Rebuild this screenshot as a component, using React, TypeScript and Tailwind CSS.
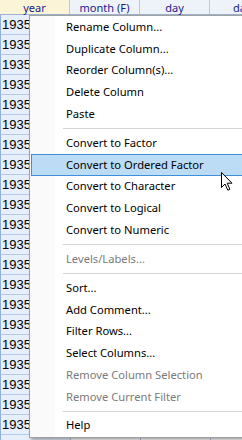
import React from "react";

type Item = { label: string; disabled?: boolean; active?: boolean } | "sep";

const items: Item[] = [
  { label: "Rename Column..." },
  { label: "Duplicate Column..." },
  { label: "Reorder Column(s)..." },
  { label: "Delete Column" },
  { label: "Paste" },
  "sep",
  { label: "Convert to Factor" },
  { label: "Convert to Ordered Factor", active: true },
  { label: "Convert to Character" },
  { label: "Convert to Logical" },
  { label: "Convert to Numeric" },
  "sep",
  { label: "Levels/Labels...", disabled: true },
  "sep",
  { label: "Sort..." },
  { label: "Add Comment..." },
  { label: "Filter Rows..." },
  { label: "Select Columns..." },
  { label: "Remove Column Selection", disabled: true },
  { label: "Remove Current Filter", disabled: true },
  "sep",
  { label: "Help" },
];

const headers = ["year", "month (F)", "day", "date"];

export default function App() {
  const rows = Array.from({ length: 22 });
  return (
    <div
      className="relative w-[242px] h-[440px] overflow-hidden bg-white"
      style={{ fontFamily: '"Noto Sans", "Liberation Sans", sans-serif' }}
    >
      {/* Header */}
      <div className="flex h-[15px] border-b border-[#9fb4d2] bg-[#eef3fa]">
        {headers.map((h, i) => (
          <div
            key={h}
            className={`w-[70px] shrink-0 h-[14px] flex items-center justify-center border-r border-[#b9c9e0] text-[11px] leading-[13px] text-[#1a1a8a] ${
              i === 0 ? "bg-[#fcf4d6]" : "bg-[#eef3fa]"
            }`}
          >
            {h}
          </div>
        ))}
      </div>
      {/* Rows */}
      <div className="flex flex-col border-l border-[#8fb0e0]">
        {rows.map((_, r) => (
          <div key={r} className="flex h-[20px]">
            {headers.map((h, i) => (
              <div
                key={h}
                className={`w-[70px] shrink-0 h-[20px] border-r border-b border-[#b4cbea] flex items-center pl-[1px] text-[13px] text-black ${
                  i === 0 ? "bg-[#e6effb]" : "bg-white"
                }`}
                style={{ fontFamily: '"Liberation Sans", Arial, sans-serif' }}
              >
                {i === 0 ? "1935" : ""}
              </div>
            ))}
          </div>
        ))}
      </div>

      {/* Context menu */}
      <div className="absolute left-[29px] top-[15px] w-[230px] h-[423px] border border-[#a0a0a0] bg-white shadow-[2px_2px_3px_rgba(0,0,0,0.35)]">
        <div className="absolute left-0 top-0 bottom-0 w-[25px] bg-[#fafafa]" />
        <div className="relative flex flex-col pt-[0.5px] pl-[1px]">
          {items.map((it, idx) =>
            it === "sep" ? (
              <div key={idx} className="h-[7.2px] flex items-center pl-[32px]">
                <div className="h-px w-full bg-[#d4d4d4]" />
              </div>
            ) : (
              <div
                key={idx}
                className={`h-[21.75px] flex items-center text-[11.2px] whitespace-nowrap ${
                  it.active
                    ? "bg-[#bcdcf5] border border-[#3d8fd9] pl-[34px]"
                    : "pl-[35px]"
                } ${it.disabled ? "text-[#7a7a7a]" : "text-black"}`}
              >
                {it.label}
              </div>
            )
          )}
        </div>
      </div>

      {/* Mouse cursor */}
      <svg
        className="absolute left-[221px] top-[172px]"
        width="14"
        height="20"
        viewBox="0 0 14 20"
      >
        <path
          d="M0.5 0.5 L0.5 15.5 L4 12 L6.8 18.2 L8.9 17.3 L6.2 11.2 L11 11.2 Z"
          fill="white"
          stroke="black"
          strokeWidth="1"
          strokeLinejoin="miter"
        />
      </svg>
    </div>
  );
}
